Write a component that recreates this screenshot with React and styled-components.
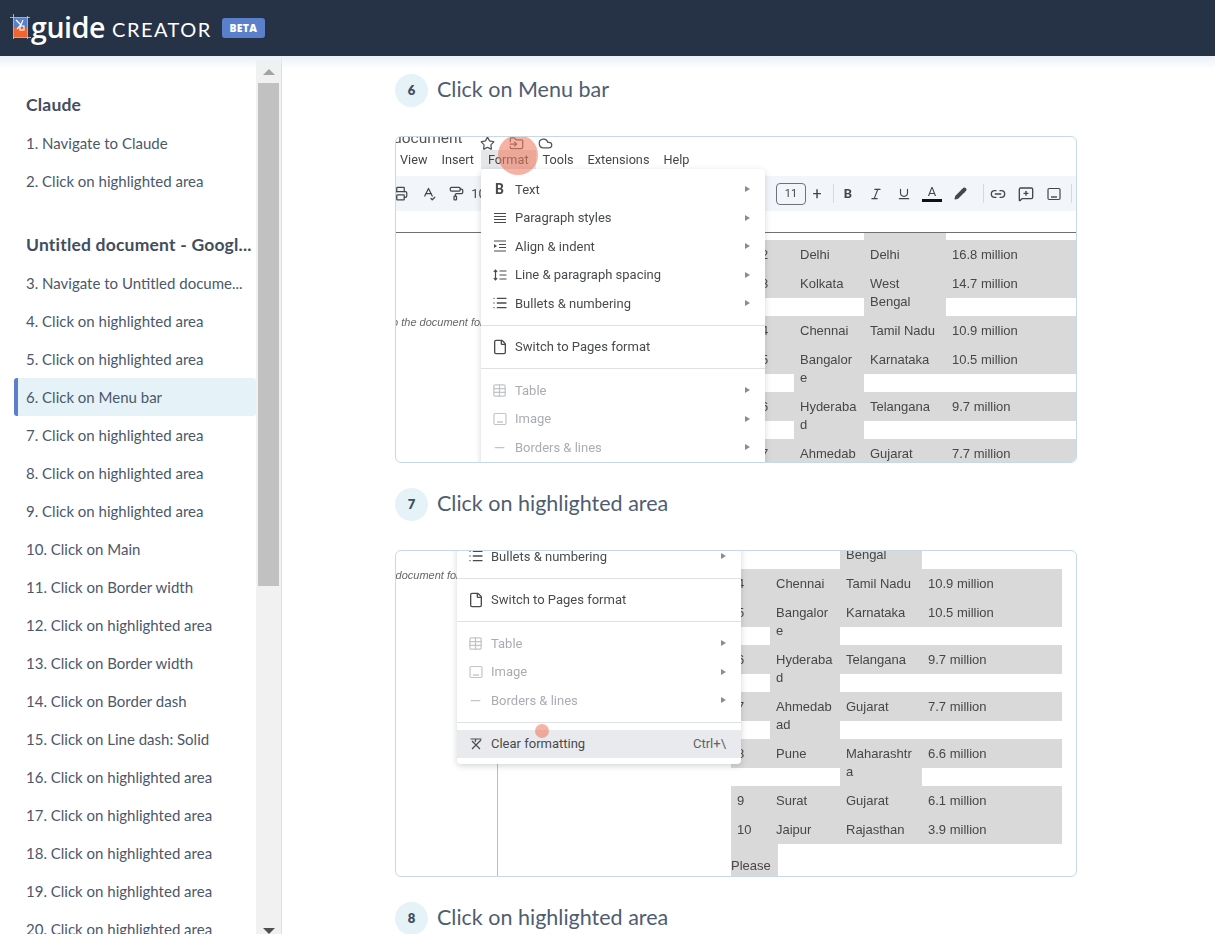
import React from "react";
import styled, { createGlobalStyle } from "styled-components";
import {
  List, File, Table, Minus, Star, FolderInput, Cloud, Printer, SpellCheck, PaintRoller,
  Italic, Underline, Pencil, Link2, MessageSquarePlus,
} from "lucide-react";

const UI_FONT = `"Lato", "Open Sans", sans-serif`;

const GlobalStyle = createGlobalStyle`
  html, body { margin: 0; padding: 0; height: 100%; overflow: hidden; background: #fff; }
  body { font-family: ${UI_FONT}; color: #4a5568; }
  * { box-sizing: border-box; }
`;

const groups = [
  { title: "Claude", items: ["1. Navigate to Claude", "2. Click on highlighted area"] },
  {
    title: "Untitled document - Googl...",
    items: [
      "3. Navigate to Untitled docume...",
      "4. Click on highlighted area",
      "5. Click on highlighted area",
      "6. Click on Menu bar",
      "7. Click on highlighted area",
      "8. Click on highlighted area",
      "9. Click on highlighted area",
      "10. Click on Main",
      "11. Click on Border width",
      "12. Click on highlighted area",
      "13. Click on Border width",
      "14. Click on Border dash",
      "15. Click on Line dash: Solid",
      "16. Click on highlighted area",
      "17. Click on highlighted area",
      "18. Click on highlighted area",
      "19. Click on highlighted area",
      "20. Click on highlighted area",
    ],
  },
];

const tableRows = [
  ["2", "Delhi", "Delhi", "16.8 million"],
  ["3", "Kolkata", "West Bengal", "14.7 million"],
  ["4", "Chennai", "Tamil Nadu", "10.9 million"],
  ["5", "Bangalore", "Karnataka", "10.5 million"],
  ["6", "Hyderabad", "Telangana", "9.7 million"],
  ["7", "Ahmedabad", "Gujarat", "7.7 million"],
  ["8", "Pune", "Maharashtra", "6.6 million"],
  ["9", "Surat", "Gujarat", "6.1 million"],
  ["10", "Jaipur", "Rajasthan", "3.9 million"],
];

// small menu glyphs that lucide has no close match for
const Glyph = ({ children, fill = "none" }) => (
  <svg width="16" height="16" viewBox="0 0 16 16" fill={fill} stroke="currentColor" strokeWidth="1.2">
    {children}
  </svg>
);

const ParagraphIcon = () => (
  <Glyph><path d="M2 3.5h12M2 6.5h12M2 9.5h12M2 12.5h12" /></Glyph>
);
const IndentIcon = () => (
  <Glyph>
    <path d="M2 3h12M7 6.5h7M7 9.5h7M2 13h12" />
    <path d="M2 6l3 2-3 2z" fill="currentColor" stroke="none" />
  </Glyph>
);
const LineSpacingIcon = () => (
  <Glyph>
    <path d="M3.5 3v10M1.8 4.8 3.5 3l1.7 1.8M1.8 11.2 3.5 13l1.7-1.8" />
    <path d="M7.5 4h7M7.5 8h7M7.5 12h7" />
  </Glyph>
);
const PictureIcon = () => (
  <Glyph>
    <rect x="2" y="2.5" width="12" height="11" rx="1.2" />
    <path d="M5 11h6" strokeWidth="1.4" />
  </Glyph>
);
const ClearIcon = () => (
  <Glyph>
    <path d="M2.5 3h11M8 3l-1 3M4 13l9-9M4 5l8 8" />
  </Glyph>
);

const menuTop = [
  { label: "Text", bold: true },
  { label: "Paragraph styles", icon: <ParagraphIcon /> },
  { label: "Align & indent", icon: <IndentIcon /> },
  { label: "Line & paragraph spacing", icon: <LineSpacingIcon /> },
  { label: "Bullets & numbering", icon: <List size={16} /> },
];
const menuOff = [
  { label: "Table", icon: <Table size={15} /> },
  { label: "Image", icon: <PictureIcon /> },
  { label: "Borders & lines", icon: <Minus size={15} /> },
];

const Page = styled.div`
  height: 934px;
  display: flex;
  flex-direction: column;
  overflow: hidden;
`;

const Header = styled.header`
  position: relative;
  z-index: 2;
  flex: 0 0 56px;
  background: #263346;
  display: flex;
  align-items: center;
  padding-left: 10px;
  color: #fff;
  &::after {
    content: "";
    position: absolute;
    left: 0;
    right: 0;
    top: 56px;
    height: 13px;
    background: linear-gradient(#e9f1f6, rgba(255, 255, 255, 0));
    pointer-events: none;
  }
`;

const LogoWord = styled.span`
  font-family: "Open Sans", sans-serif;
  font-weight: 600;
  font-size: 28.5px;
  letter-spacing: -0.4px;
  line-height: 56px;
  margin-top: -3px;
`;

const LogoSub = styled.span`
  font-family: "Lato", sans-serif;
  font-size: 20px;
  letter-spacing: 1.5px;
  margin-left: 7px;
  margin-top: 1px;
`;

const BetaBadge = styled.span`
  margin-left: 10px;
  width: 43px;
  height: 20px;
  border-radius: 3px;
  background: #5b80cb;
  font-family: "Open Sans", sans-serif;
  font-weight: 800;
  font-size: 10.5px;
  letter-spacing: 0.2px;
  display: flex;
  align-items: center;
  justify-content: center;
`;

const Body = styled.div`
  flex: 1;
  min-height: 0;
  display: flex;
`;

const Sidebar = styled.aside`
  flex: 0 0 282px;
  display: flex;
  border-right: 1px solid #d7e0e6;
  overflow: hidden;
`;

const SideList = styled.nav`
  flex: 1;
  min-width: 0;
  padding: 30px 0 0 14px;
`;

const SideGroup = styled.div`
  margin-bottom: 26px;
`;

const SideHeading = styled.div`
  height: 38px;
  display: flex;
  align-items: center;
  padding: 0 0 2px 12px;
  font-weight: 700;
  font-size: 17.5px;
  letter-spacing: 0.2px;
  color: #414d60;
  white-space: nowrap;
`;

const SideItem = styled.div`
  height: 38px;
  display: flex;
  align-items: center;
  padding-left: ${(p) => (p.$active ? "8px" : "12px")};
  font-size: 15px;
  color: #4c586a;
  white-space: nowrap;
  border-radius: 3px;
  background: ${(p) => (p.$active ? "#e5f3f8" : "transparent")};
  border-left: ${(p) => (p.$active ? "4px solid #5b80cb" : "none")};
`;

const ScrollTrack = styled.div`
  flex: 0 0 25px;
  margin: 4px 0 -8px;
  background: #f1f1f1;
  display: flex;
  flex-direction: column;
  align-items: center;
`;

const ScrollArrow = styled.div`
  flex: 0 0 23px;
  margin-top: ${(p) => (p.$down ? "auto" : "0")};
  display: flex;
  align-items: center;
  justify-content: center;
  &::before {
    content: "";
    border-left: 6px solid transparent;
    border-right: 6px solid transparent;
    ${(p) => (p.$down ? "border-top: 6px solid #505050;" : "border-bottom: 6px solid #a3a3a3;")}
  }
`;

const ScrollThumb = styled.div`
  flex: 0 0 503px;
  width: 21px;
  background: #c1c1c1;
`;

const Main = styled.main`
  flex: 1;
  min-width: 0;
  padding: 17px 0 0 113px;
  overflow: hidden;
`;

const Step = styled.section`
  width: 682px;
  margin-bottom: 24px;
`;

const StepHead = styled.div`
  display: flex;
  align-items: center;
  gap: 9px;
  height: 34px;
  margin-bottom: 29px;
`;

const StepNumber = styled.span`
  width: 33px;
  height: 33px;
  border-radius: 50%;
  background: #e5f3f8;
  display: flex;
  align-items: center;
  justify-content: center;
  font-weight: 800;
  font-size: 13px;
  color: #414d60;
`;

const StepTitle = styled.h2`
  margin: 0 0 3px;
  font-weight: 400;
  font-size: 21.5px;
  color: #4f5d70;
`;

const ShotFrame = styled.div`
  height: 327px;
  border: 1px solid #c6dae6;
  border-radius: 6px;
  overflow: hidden;
  background: #fff;
`;

const Canvas = styled.div`
  position: relative;
  width: 720px;
  margin: ${(p) => `-${p.$y}px 0 0 -${p.$x}px`};
  font-family: "Roboto", sans-serif;
  font-size: 12.7px;
  color: #444746;
  filter: blur(0.45px);
`;

const DocTitle = styled.div`
  height: 13px;
  display: flex;
  align-items: flex-end;
  color: #555;
`;

const DocName = styled.span`
  font-size: 15.5px;
  line-height: 18px;
  margin-left: -3px;
  width: 87px;
  white-space: nowrap;
  transform: translateY(-3px);
`;

const TitleIcons = styled.span`
  display: flex;
  gap: 14px;
  height: 13px;
  align-items: center;
`;

const MenuBar = styled.div`
  height: 19px;
  display: flex;
  align-items: center;
  gap: 14px;
  padding-left: 4px;
`;

const MenuBarItem = styled.span`
  line-height: 19px;
  padding: 0 7px;
  margin: 0 -7px;
  background: ${(p) => (p.$open ? "#e4e6e8" : "transparent")};
`;

const Toolbar = styled.div`
  height: 35px;
  margin-top: 7px;
  background: #f2f6fb;
  display: flex;
  align-items: center;
`;

const Tool = styled.span`
  flex: 0 0 28px;
  min-width: 0;
  margin-left: ${(p) => p.$ml || 0}px;
  display: flex;
  align-items: center;
  justify-content: center;
  white-space: nowrap;
  font-weight: ${(p) => (p.$bold ? 700 : 400)};
  font-size: ${(p) => p.$size || 13}px;
  color: #444746;
`;

const SizeBox = styled.span`
  flex: 0 0 30px;
  margin-left: 2px;
  height: 22px;
  border: 1px solid #6f7378;
  border-radius: 4px;
  display: flex;
  align-items: center;
  justify-content: center;
  font-size: 11px;
`;

const ToolSep = styled.span`
  flex: 0 0 1px;
  height: 19px;
  margin-left: ${(p) => p.$ml}px;
  background: #d5dae0;
`;

const ColorA = styled.span`
  display: flex;
  flex-direction: column;
  align-items: center;
  width: 20px;
  line-height: 14px;
  border-bottom: 3px solid #111;
`;

const DocBody = styled.div`
  margin-top: 21px;
  border-top: 1px solid #6e7174;
  display: flex;
  align-items: flex-start;
`;

const NoteColumn = styled.div`
  flex: 0 0 126px;
  min-width: 0;
  height: 520px;
  border-right: 1px solid #bcbcbc;
  padding-top: 83px;
`;

const NoteText = styled.div`
  margin-left: -7px;
  white-space: nowrap;
  font: italic 11px "Liberation Sans", sans-serif;
  color: #666;
`;

const DataTable = styled.div`
  margin-left: 233px;
  flex: 0 0 331px;
  display: grid;
  grid-template-columns: 39px 70px 82px 140px;
  align-items: start;
  font: 13px/18px "Liberation Sans", sans-serif;
  color: #474747;
`;

const Cell = styled.div`
  grid-column: ${(p) => p.$col};
  background: #d9d9d9;
  padding: 5.5px 6px;
  overflow-wrap: anywhere;
`;

const TopStub = styled.div`
  grid-column: 3;
  height: 7px;
  background: #d9d9d9;
`;

const PleaseCell = styled.div`
  grid-column: 1 / span 4;
  width: 47px;
  height: 60px;
  padding-top: 13px;
  background: #d9d9d9;
`;

const FormatMenu = styled.div`
  position: absolute;
  left: 85px;
  top: 32px;
  width: 284px;
  padding: 6px 0;
  background: #fff;
  border-radius: 4px;
  box-shadow: 0 2px 6px rgba(60, 64, 67, 0.22);
`;

const MenuRow = styled.div`
  height: ${(p) => (p.$tall ? 28 : 28.5)}px;
  display: flex;
  align-items: center;
  padding-left: 34px;
  padding-right: 15px;
  position: relative;
  font-size: 13px;
  color: ${(p) => (p.$off ? "#a9adb1" : "#484b4e")};
  background: ${(p) => (p.$hover ? "#e8eaed" : "transparent")};
`;

const RowIcon = styled.span`
  position: absolute;
  left: 10px;
  width: 17px;
  display: flex;
  justify-content: center;
  font-weight: 700;
  font-size: 14px;
  opacity: ${(p) => (p.$off ? 0.7 : 1)};
`;

const RowArrow = styled.span`
  margin-left: auto;
  border-left: 5px solid #8a8d90;
  border-top: 3px solid transparent;
  border-bottom: 3px solid transparent;
`;

const RowShortcut = styled.span`
  margin-left: auto;
  color: #5f6368;
`;

const MenuDivider = styled.hr`
  margin: 7px 0;
  border: 0;
  border-top: 1px solid #dfe1e4;
`;

const ClickMark = styled.span`
  position: absolute;
  left: ${(p) => p.$x}px;
  top: ${(p) => p.$y}px;
  width: ${(p) => p.$r * 2}px;
  height: ${(p) => p.$r * 2}px;
  margin: ${(p) => `-${p.$r}px 0 0 -${p.$r}px`};
  border-radius: 50%;
  background: rgba(240, 122, 96, 0.58);
`;

const LogoMark = () => (
  <svg width="21" height="25" viewBox="0 0 21 25" style={{ flex: "none", marginTop: "-3px" }}>
    <rect x="4" y="4" width="13" height="10" fill="#5b80cb" />
    <rect x="4" y="14" width="13" height="9" fill="#f0642f" />
    <path d="M6 6l5 5M13 6l-2 5M7 15l4-4" stroke="#fff" strokeWidth="1.1" fill="none" />
    <rect x="10" y="12" width="4" height="4" fill="none" stroke="#fff" strokeWidth="1.1" />
    <path d="M0 3.5h20M3.5 0v25M3 23.5h18M17.5 2v23" stroke="#c9ced4" strokeWidth="0.8" fill="none" />
  </svg>
);

const DocShot = ({ x = 0, y = 0, mark }) => (
  <ShotFrame>
    <Canvas $x={x} $y={y}>
      <DocTitle>
        <DocName>document</DocName>
        <TitleIcons>
          <Star size={15} />
          <FolderInput size={15} />
          <Cloud size={15} />
        </TitleIcons>
      </DocTitle>
      <MenuBar>
        <MenuBarItem>View</MenuBarItem>
        <MenuBarItem>Insert</MenuBarItem>
        <MenuBarItem $open>Format</MenuBarItem>
        <MenuBarItem>Tools</MenuBarItem>
        <MenuBarItem>Extensions</MenuBarItem>
        <MenuBarItem>Help</MenuBarItem>
      </MenuBar>
      <Toolbar>
        <Tool $ml={-10}><Printer size={15} /></Tool>
        <Tool><SpellCheck size={15} /></Tool>
        <Tool><PaintRoller size={15} /></Tool>
        <Tool $ml={3}>100%</Tool>
        <Tool $ml={245}>−</Tool>
        <SizeBox>11</SizeBox>
        <Tool $ml={-3} $size={16}>+</Tool>
        <ToolSep $ml={2} />
        <Tool $bold>B</Tool>
        <Tool><Italic size={14} /></Tool>
        <Tool><Underline size={14} /></Tool>
        <Tool><ColorA>A</ColorA></Tool>
        <Tool><Pencil size={13} fill="currentColor" /></Tool>
        <ToolSep $ml={9} />
        <Tool><Link2 size={16} /></Tool>
        <Tool><MessageSquarePlus size={16} /></Tool>
        <Tool><PictureIcon /></Tool>
        <ToolSep $ml={3} />
      </Toolbar>
      <DocBody>
        <NoteColumn>
          <NoteText>to the document for reference</NoteText>
        </NoteColumn>
        <DataTable>
          <TopStub />
          {tableRows.map((row) =>
            row.map((text, i) => <Cell key={row[0] + i} $col={i + 1}>{text}</Cell>)
          )}
          <PleaseCell>Please</PleaseCell>
        </DataTable>
      </DocBody>
      <FormatMenu>
        {menuTop.map((m) => (
          <MenuRow key={m.label}>
            <RowIcon>{m.bold ? "B" : m.icon}</RowIcon>
            {m.label}
            <RowArrow />
          </MenuRow>
        ))}
        <MenuDivider />
        <MenuRow>
          <RowIcon><File size={16} /></RowIcon>
          Switch to Pages format
        </MenuRow>
        <MenuDivider />
        {menuOff.map((m) => (
          <MenuRow key={m.label} $off>
            <RowIcon $off>{m.icon}</RowIcon>
            {m.label}
            <RowArrow />
          </MenuRow>
        ))}
        <MenuDivider />
        <MenuRow $tall $hover>
          <RowIcon><ClearIcon /></RowIcon>
          Clear formatting
          <RowShortcut>Ctrl+\</RowShortcut>
        </MenuRow>
      </FormatMenu>
      {mark && <ClickMark $x={mark.x} $y={mark.y} $r={mark.r} />}
    </Canvas>
  </ShotFrame>
);

const App = () => (
  <Page>
    <GlobalStyle />
    <Header>
      <LogoMark />
      <LogoWord>guide</LogoWord>
      <LogoSub>CREATOR</LogoSub>
      <BetaBadge>BETA</BetaBadge>
    </Header>
    <Body>
      <Sidebar>
        <SideList>
          {groups.map((g) => (
            <SideGroup key={g.title}>
              <SideHeading>{g.title}</SideHeading>
              {g.items.map((item) => (
                <SideItem key={item} $active={item.startsWith("6.")}>{item}</SideItem>
              ))}
            </SideGroup>
          ))}
        </SideList>
        <ScrollTrack>
          <ScrollArrow />
          <ScrollThumb />
          <ScrollArrow $down />
        </ScrollTrack>
      </Sidebar>
      <Main>
        <Step>
          <StepHead>
            <StepNumber>6</StepNumber>
            <StepTitle>Click on Menu bar</StepTitle>
          </StepHead>
          <DocShot mark={{ x: 122, y: 18, r: 20 }} />
        </Step>
        <Step>
          <StepHead>
            <StepNumber>7</StepNumber>
            <StepTitle>Click on highlighted area</StepTitle>
          </StepHead>
          <DocShot x={24} y={161} mark={{ x: 170, y: 341, r: 7 }} />
        </Step>
        <Step>
          <StepHead>
            <StepNumber>8</StepNumber>
            <StepTitle>Click on highlighted area</StepTitle>
          </StepHead>
        </Step>
      </Main>
    </Body>
  </Page>
);

export default App;
